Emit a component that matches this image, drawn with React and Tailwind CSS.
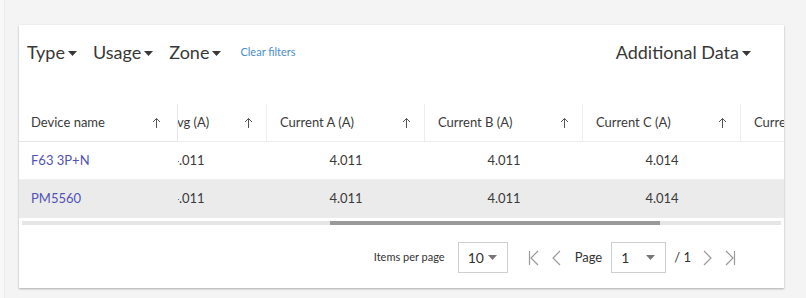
import React from "react";

const columns = [
  { label: "Current Avg (A)", rows: ["4.011", "4.011"] },
  { label: "Current A (A)", rows: ["4.011", "4.011"] },
  { label: "Current B (A)", rows: ["4.011", "4.011"] },
  { label: "Current C (A)", rows: ["4.014", "4.014"] },
  { label: "Current N (A)", rows: ["", ""] },
];

const devices = ["F63 3P+N", "PM5560"];

// small caret used by the filter dropdowns
const Caret = ({ className = "" }) => (
  <svg width="9" height="5" viewBox="0 0 9 5" className={className}>
    <path d="M0 0h9L4.5 5z" fill="currentColor" />
  </svg>
);

const SortArrow = () => (
  <svg width="9" height="11" viewBox="0 0 9 11" className="text-[#555]">
    <path d="M4.5 11V1.5M1 5l3.5-3.5L8 5" fill="none" stroke="currentColor" strokeWidth="1" />
  </svg>
);

const Chevron = ({ dir = "left", bar = false }) => (
  <svg width="14" height="18" viewBox="0 0 14 18" className="text-[#9a9a9a]">
    {dir === "left" ? (
      <>
        {bar && <path d="M2.5 2v14" stroke="currentColor" strokeWidth="1.2" />}
        <path d="M11 2L4 9l7 7" fill="none" stroke="currentColor" strokeWidth="1.2" />
      </>
    ) : (
      <>
        <path d="M3 2l7 7-7 7" fill="none" stroke="currentColor" strokeWidth="1.2" />
        {bar && <path d="M11.5 2v14" stroke="currentColor" strokeWidth="1.2" />}
      </>
    )}
  </svg>
);

const Filter = ({ label }) => (
  <button className="flex items-center gap-[3px] text-[18px] text-[#383838]">
    {label}
    <Caret className="mt-[2px]" />
  </button>
);

export default function App() {
  return (
    <div
      className="flex h-[298px] w-[806px] bg-[#f4f4f4]"
      style={{ fontFamily: "Lato, 'Open Sans', sans-serif" }}
    >
      <div className="w-[5px] border-r border-[#ebebeb] bg-[#f8f8f8]" />
      <div className="flex-1 pl-[14px] pr-[22px] pt-[25px]">
        <div className="h-[263px] w-[765px] bg-white shadow-[0_1px_2px_rgba(0,0,0,0.3)]">
          {/* Filters */}
          <div className="flex items-center justify-between pl-[8px] pr-[33px] pt-[14px]">
            <div className="flex items-center">
              <Filter label="Type" />
              <div className="ml-[16px]">
                <Filter label="Usage" />
              </div>
              <div className="ml-[16px]">
                <Filter label="Zone" />
              </div>
              <button className="ml-[19px] text-[11px] text-[#4a8ec8]">Clear filters</button>
            </div>
            <Filter label="Additional Data" />
          </div>

          {/* Table */}
          <div className="mt-[38px] flex">
            <div className="w-[159px] shrink-0">
              <div className="flex h-[38px] items-center justify-between border-b border-r border-[#e6e6e6] pl-[12px] pr-[16px] text-[13px] text-[#3a3a3a]">
                Device name
                <SortArrow />
              </div>
              {devices.map((d, i) => (
                <div
                  key={d}
                  className={`flex h-[38px] items-center pl-[12px] text-[13px] text-[#5252b8] ${
                    i === 1 ? "bg-[#ebebeb]" : "border-b border-[#f0f0f0]"
                  }`}
                >
                  {d}
                </div>
              ))}
            </div>
            <div className="flex-1 overflow-hidden">
              <div className="-ml-[69px] flex">
                {columns.map((c) => (
                  <div key={c.label} className="w-[158px] shrink-0">
                    <div className="flex h-[38px] items-center justify-between border-b border-r border-[#ededed] pl-[13px] pr-[13px] text-[13px] text-[#3a3a3a]">
                      <span className="whitespace-nowrap">{c.label}</span>
                      <SortArrow />
                    </div>
                    {c.rows.map((v, i) => (
                      <div
                        key={i}
                        className={`flex h-[38px] items-center justify-center text-[13px] text-[#3a3a3a] ${
                          i === 1 ? "bg-[#ebebeb]" : "border-b border-[#f0f0f0]"
                        }`}
                      >
                        {v}
                      </div>
                    ))}
                  </div>
                ))}
              </div>
            </div>
          </div>

          {/* horizontal scrollbar */}
          <div className="mx-[3px] mt-[2px] flex h-[5px] items-center">
            <div className="flex h-[4px] w-full bg-[#e6e6e6]">
              <div className="w-[308px]" />
              <div className="w-[330px] bg-[#9a9a9a]" />
            </div>
          </div>

          {/* Pagination */}
          <div className="mt-[17px] flex items-center justify-end pr-[47px] text-[#333]">
            <span className="text-[11px]">Items per page</span>
            <div className="ml-[13px] flex h-[31px] w-[50px] items-center justify-between border border-[#cfcfcf] pl-[9px] pr-[10px] text-[14px]">
              10
              <Caret className="text-[#777]" />
            </div>
            <div className="ml-[19px] flex items-center gap-[8px]">
              <Chevron dir="left" bar />
              <Chevron dir="left" />
            </div>
            <span className="ml-[12px] text-[13px]">Page</span>
            <div className="ml-[9px] flex h-[31px] w-[55px] items-center justify-between border border-[#cfcfcf] pl-[9px] pr-[10px] text-[14px]">
              1
              <Caret className="text-[#777]" />
            </div>
            <span className="ml-[8px] text-[13px]">/ 1</span>
            <div className="ml-[10px] flex items-center gap-[8px]">
              <Chevron dir="right" />
              <Chevron dir="right" bar />
            </div>
          </div>
        </div>
      </div>
    </div>
  );
}
